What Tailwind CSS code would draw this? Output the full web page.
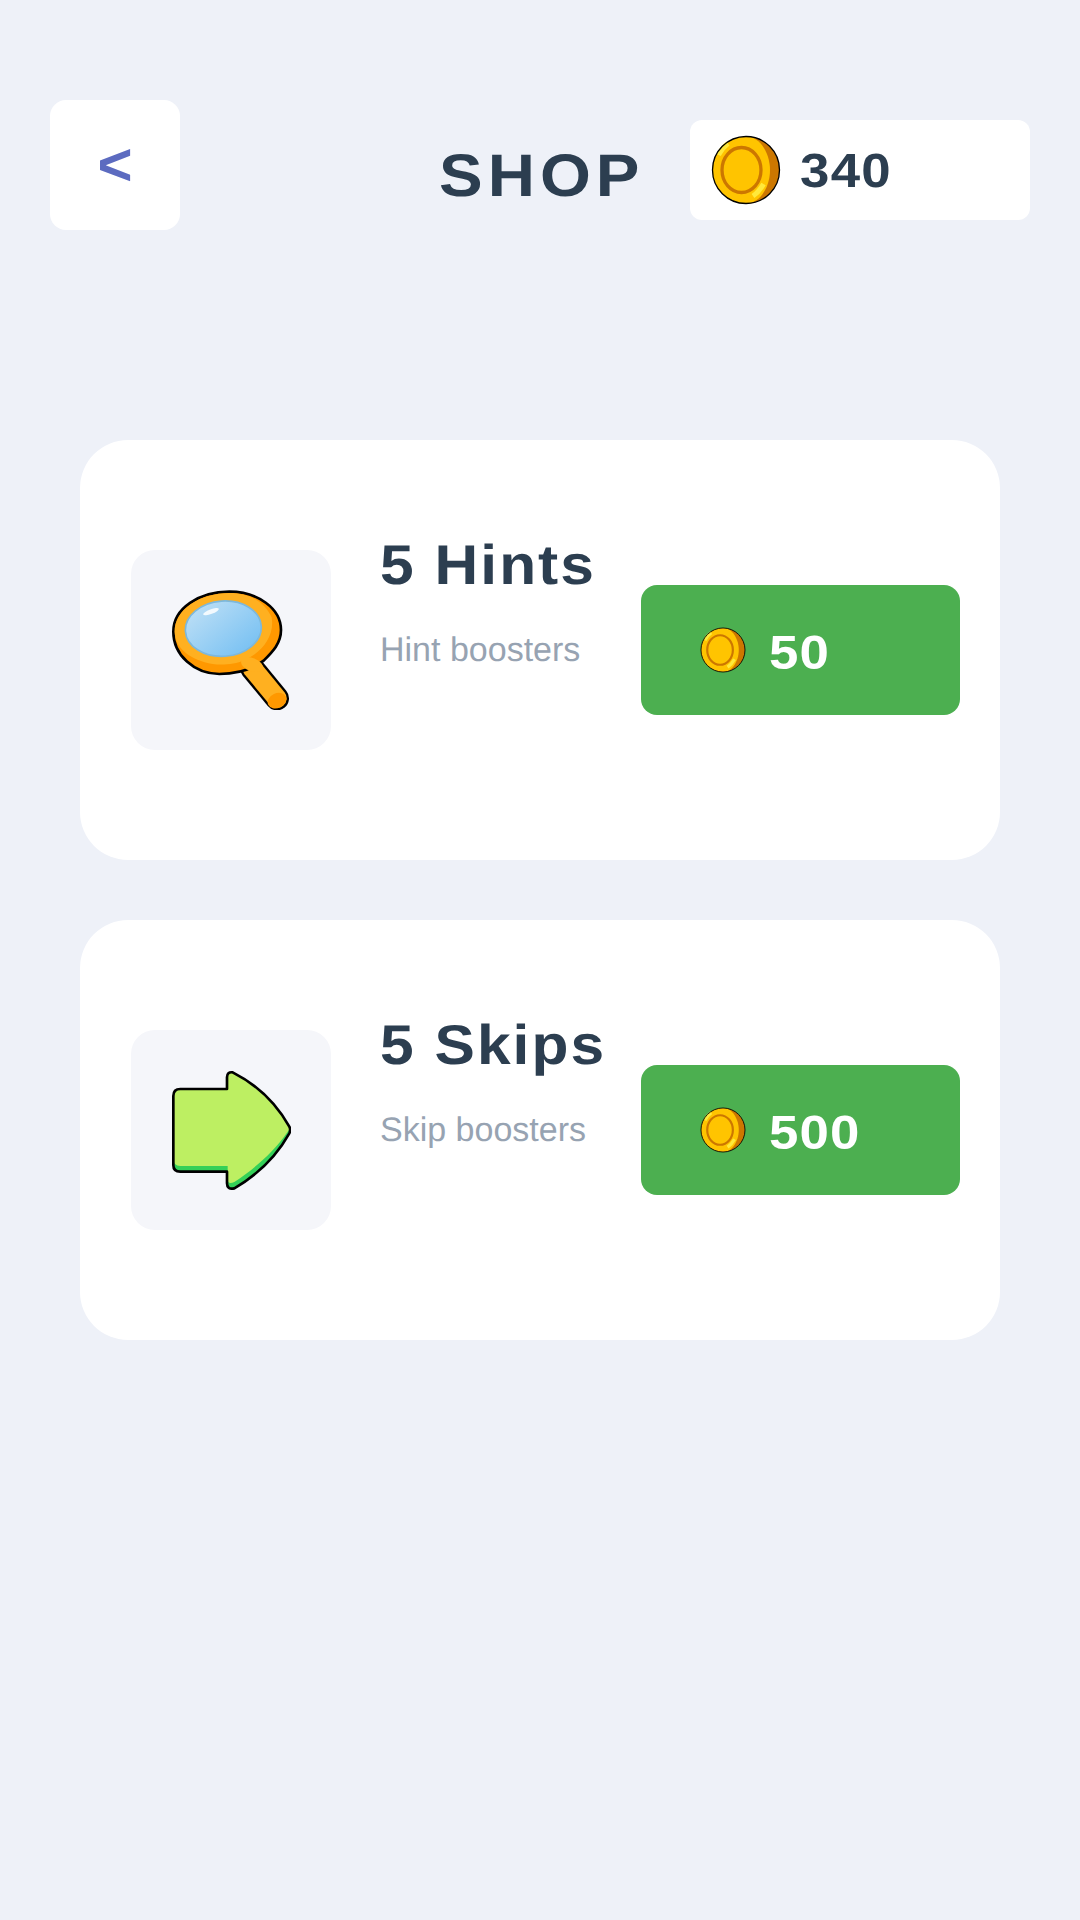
<!DOCTYPE html>
<html><head><meta charset="utf-8"><script src="https://cdn.jsdelivr.net/npm/@tailwindcss/browser@4"></script></head>
<body class="m-0 bg-[#eef1f8]">
<svg width="0" height="0" class="absolute">
<defs>
<symbol id="coin" viewBox="0 0 70 70">
<circle cx="35" cy="35" r="33.500" fill="#cc7700"/>
<path d="M35 1.500C18 1.500 1.500 16 1.500 35S18 68.500 35 68.500C49 68.500 59 52 59 35S49 1.500 35 1.500Z" fill="#ffc400"/>
<ellipse cx="30.500" cy="35" rx="19.500" ry="22.500" fill="none" stroke="#cc7700" stroke-width="3.300"/>
<path d="M7.500 20Q11 13 17 8.500" fill="none" stroke="#ffe93b" stroke-width="5"/>
<path d="M52.500 49Q48 57 42 61" fill="none" stroke="#ffe93b" stroke-width="5"/>
<circle cx="35" cy="35" r="33.500" fill="none" stroke="#000" stroke-width="1.300"/>
</symbol>
</defs>
</svg>
<div class="w-[1080px] h-[1920px] font-['Liberation_Sans',Arial,sans-serif] overflow-hidden [text-rendering:geometricPrecision]">
<header class="flex items-start pt-[100px] pl-[50px]">
<div class="w-[130px] h-[130px] rounded-2xl bg-white flex items-center justify-center text-[#5c6bc0] text-[60px] font-bold">&lt;</div>
<h1 class="ml-[259px] mt-[36px] w-[210px] text-[60px] leading-[80px] font-bold tracking-[4.600px] text-[#2c3e50] whitespace-nowrap origin-left scale-x-[1.09]">SHOP</h1>
<div class="ml-[41px] mt-5 w-[340px] h-[100px] rounded-xl bg-white flex items-center pl-[21px]">
<svg class="w-[70px] h-[70px]"><use href="#coin"/></svg>
<span class="ml-[19px] pt-[3px] text-[48px] font-bold tracking-[1.200px] text-[#2c3e50] origin-left scale-x-[1.1]">340</span>
</div>
</header>
<main class="flex flex-col gap-[60px] mt-[210px] mx-[80px]">
<section class="h-[420px] rounded-[48px] bg-white flex items-center pl-[51px]">
<div class="w-[200px] h-[200px] rounded-3xl bg-[#f5f6fa] flex items-center justify-center">
<svg width="120" height="120" viewBox="150 150 360 360">
<defs><linearGradient id="lens" x1="0" y1="0" x2="1" y2="1"><stop offset="0" stop-color="#c4e2f6"/><stop offset="1" stop-color="#6fbdf2"/></linearGradient></defs>
<line x1="393" y1="384" x2="468" y2="475" stroke="#000" stroke-width="72" stroke-linecap="round"/>
<line x1="393" y1="384" x2="468" y2="475" stroke="#ffb020" stroke-width="58" stroke-linecap="round"/>
<ellipse cx="468" cy="482" rx="29" ry="22" transform="rotate(-25 468 482)" fill="#ff9800"/>
<path d="M157 275C157 205 235 155 325 155C410 155 480 205 480 270C480 310 455 335 428 362C390 390 345 402 295 402C220 402 157 345 157 275Z" fill="#ff9800" stroke="#000" stroke-width="8"/>
<path d="M161 275C161 208 238 159 325 159C385 159 430 185 452 232C462 290 420 340 370 360C340 375 300 375 275 372C210 360 161 325 161 275Z" fill="#ffb020"/>
<ellipse cx="307" cy="266" rx="114" ry="83" transform="rotate(-4 307 266)" fill="url(#lens)" stroke="#7db8dc" stroke-width="5"/>
<ellipse cx="270" cy="215" rx="25" ry="7" transform="rotate(-20 270 215)" fill="#fff" fill-opacity=".85"/>
<ellipse cx="393" cy="374" rx="34" ry="20" transform="rotate(20 393 374)" fill="#ffb020"/>
</svg>
</div>
<div class="ml-[49px] w-[261px] mb-[98px]">
<h2 class="text-[56px] leading-[70px] font-bold tracking-[1.900px] text-[#2c3e50] whitespace-nowrap origin-left scale-x-[1.08]">5 Hints</h2>
<p class="mt-[28px] text-[34px] leading-[44px] text-[#97a3b2] whitespace-nowrap">Hint boosters</p>
</div>
<button class="w-[319px] h-[130px] rounded-2xl bg-[#4caf50] flex items-center pl-[59px]">
<svg class="w-[46px] h-[46px]"><use href="#coin"/></svg>
<span class="ml-[23px] pt-[5px] text-[48px] font-bold tracking-[1px] text-white origin-left scale-x-[1.1]">50</span>
</button>
</section>
<section class="h-[420px] rounded-[48px] bg-white flex items-center pl-[51px]">
<div class="w-[200px] h-[200px] rounded-3xl bg-[#f5f6fa] flex items-center justify-center">
<svg width="120" height="120" viewBox="150 150 360 360">
<path d="M178 207H318V172Q318 155 335 157C400 190 460 240 505 320Q510 330 505 340C460 420 400 470 340 505Q318 510 318 490V455H178Q157 455 157 435V228Q157 207 178 207Z" fill="#34d058"/>
<path d="M178 207H318V172Q318 155 335 157C400 190 460 240 505 320Q506 328 500 335C455 400 395 450 340 486Q320 495 320 478V438H178Q157 438 157 418V228Q157 207 178 207Z" fill="#bdef62"/>
<path d="M178 207H318V172Q318 155 335 157C400 190 460 240 505 320Q510 330 505 340C460 420 400 470 340 505Q318 510 318 490V455H178Q157 455 157 435V228Q157 207 178 207Z" fill="none" stroke="#000" stroke-width="8" stroke-linejoin="round"/>
</svg>
</div>
<div class="ml-[49px] w-[261px] mb-[98px]">
<h2 class="text-[56px] leading-[70px] font-bold tracking-[1.900px] text-[#2c3e50] whitespace-nowrap origin-left scale-x-[1.08]">5 Skips</h2>
<p class="mt-[28px] text-[34px] leading-[44px] text-[#97a3b2] whitespace-nowrap">Skip boosters</p>
</div>
<button class="w-[319px] h-[130px] rounded-2xl bg-[#4caf50] flex items-center pl-[59px]">
<svg class="w-[46px] h-[46px]"><use href="#coin"/></svg>
<span class="ml-[23px] pt-[5px] text-[48px] font-bold tracking-[1px] text-white origin-left scale-x-[1.1]">500</span>
</button>
</section>
</main>
</div>
</body></html>
